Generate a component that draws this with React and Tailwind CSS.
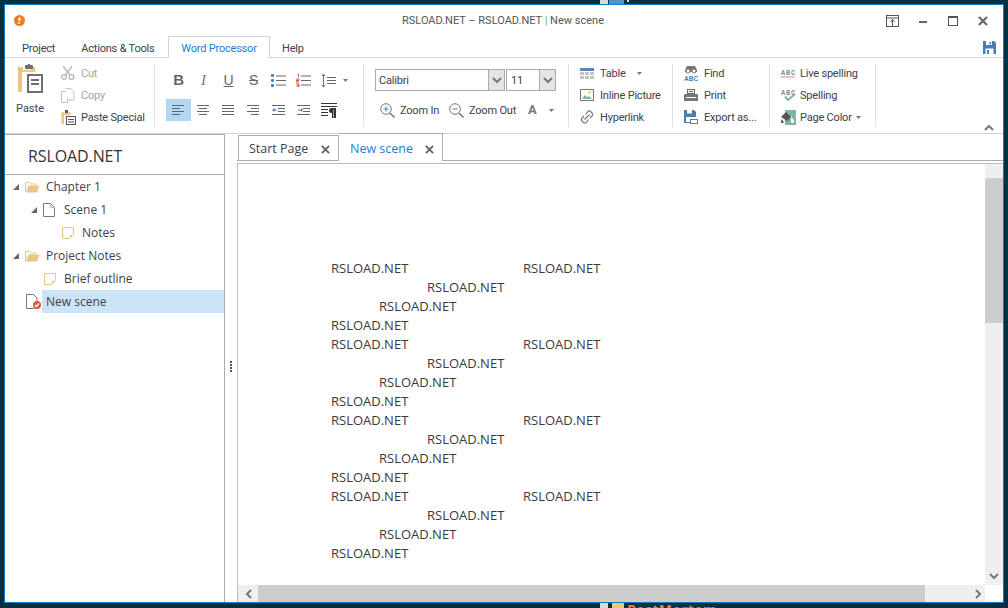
const UI = { fontFamily: '"Open Sans", sans-serif' };
const CHROME = { fontFamily: 'Roboto, sans-serif' };

const Ico = ({ w = 16, h = 16, className = '', children }) => (
  <svg width={w} height={h} viewBox={`0 0 ${w} ${h}`} fill="none" className={`shrink-0 ${className}`}>{children}</svg>
);

const Arrow = () => (
  <svg width="5" height="3" viewBox="0 0 5 3" className="shrink-0"><path d="M0 0h5L2.500 3z" fill="#777" /></svg>
);

const Chevron = () => (
  <svg width="10" height="7" viewBox="0 0 10 7" fill="none"><path d="M1 1l4 4 4-4" stroke="#777" strokeWidth="2" /></svg>
);

const PasteBig = () => (
  <Ico w={27} h={29}>
    <path d="M1 3h5v3h8V3h4v5H5v20H1z" fill="#ebc582" />
    <rect x="8" y="1" width="8" height="4" rx="1" fill="#6e6e6e" />
    <rect x="11" y="0" width="2" height="2" fill="#6e6e6e" />
    <rect x="11" y="11" width="14" height="17" stroke="#6e6e6e" strokeWidth="2" />
    <path d="M14 16h8M14 20h8" stroke="#6e6e6e" strokeWidth="2" />
  </Ico>
);
const CutIcon = () => (
  <Ico w={14} h={14}>
    <circle cx="3" cy="11" r="2.300" stroke="#b5b5b5" strokeWidth="1.300" />
    <circle cx="10.500" cy="11" r="2.300" stroke="#b5b5b5" strokeWidth="1.300" />
    <path d="M4.500 9L11 0M9 9L2 0" stroke="#b5b5b5" strokeWidth="1.300" />
  </Ico>
);
const CopyIcon = () => (
  <Ico w={14} h={15}>
    <path d="M.5 3.500h6v11h-6z" stroke="#c0c0c0" fill="#fff" />
    <path d="M4.500.500h5l3.500 3.500v8h-6" stroke="#c0c0c0" fill="#fff" />
  </Ico>
);
const PasteSmall = () => (
  <Ico w={15} h={15}>
    <path d="M.5 2h2v1h5V2h2v3H3v9H.5z" fill="#ebc582" />
    <rect x="4" y="0" width="3" height="3" fill="#555" />
    <rect x="5.500" y="6.500" width="9" height="8" stroke="#555" />
    <path d="M7 9.500h6M7 12h6" stroke="#555" />
  </Ico>
);

const BulletIcon = () => (
  <Ico w={15} h={13}>
    <path d="M5 2h10M5 6.500h10M5 11h10" stroke="#666" />
    <rect x="0" y="0" width="3" height="3" rx="1" fill="#4a7fb5" />
    <rect x="0" y="5" width="3" height="3" rx="1" fill="#4a7fb5" />
    <rect x="0" y="10" width="3" height="3" rx="1" fill="#4a7fb5" />
  </Ico>
);
const NumIcon = () => (
  <Ico w={15} h={13}>
    <path d="M5 2h10M5 6.500h10M5 11h10" stroke="#666" />
    <path d="M1 0h1.500v3M0 5h3v1.500H0V8h3M0 10h3v3H0M1 11.500h2" stroke="#d0604a" />
  </Ico>
);
const SpacingIcon = () => (
  <Ico w={15} h={15}>
    <path d="M6 4.500h9M6 7.500h9M6 10.500h9" stroke="#666" />
    <path d="M2.500 2v11" stroke="#4a7fb5" />
    <path d="M.5 3l2-2.500 2 2.500zM.5 12l2 2.500 2-2.500z" fill="#4a7fb5" />
  </Ico>
);
const AlignIcon = ({ rows }) => (
  <Ico w={13} h={10}>
    {rows.map(([x1, x2], i) => (
      <path key={i} d={`M${x1} ${i * 3 + 0.5}H${x2}`} stroke="#666" />
    ))}
  </Ico>
);
const IndentIcon = ({ right }) => (
  <Ico w={13} h={11}>
    <path d="M0 .5h13M6 3.500h7M6 6.500h7M0 9.500h13" stroke="#666" />
    <path d={right ? 'M1 5h3' : 'M2 5h3'} stroke="#4a7fb5" />
    <path d={right ? 'M4 3v4l2-2z' : 'M2.500 3v4L0 5z'} fill="#4a7fb5" />
  </Ico>
);
const ParaIcon = () => (
  <Ico w={16} h={15}>
    <path d="M0 3.500h16M0 .5h16M0 6.500h7M0 9.500h7M0 12.500h7" stroke="#333" />
    <path d="M15 5H10.500a2.500 2.500 0 000 5H11v5h1.500V6.500H13V15h2z" fill="#333" />
  </Ico>
);

const ZoomIcon = ({ out }) => (
  <Ico w={15} h={15}>
    <circle cx="6" cy="6" r="5.300" stroke="#777" />
    <path d="M10 10l4.500 4.500" stroke="#777" strokeWidth="1.500" />
    <path d="M3.500 6h5" stroke="#4a7fb5" />
    {!out && <path d="M6 3.500v5" stroke="#4a7fb5" />}
  </Ico>
);

const TableIcon = () => (
  <Ico w={14} h={11}>
    <rect width="14" height="3" fill="#5a86b8" />
    <path d="M0 4h4v3H0zM5 4h4v3H5zM10 4h4v3h-4zM0 8h4v3H0zM5 8h4v3H5zM10 8h4v3h-4z" fill="#c4c4c4" />
  </Ico>
);
const PictureIcon = () => (
  <Ico w={14} h={12}>
    <rect x=".5" y=".5" width="13" height="11" stroke="#777" />
    <path d="M2 10l3-4 2 2 2-1 3 3z" fill="#7fb5a3" />
    <circle cx="9.500" cy="3.500" r="1.300" fill="#ebc582" />
  </Ico>
);
const LinkIcon = () => (
  <Ico w={14} h={14}>
    <path d="M5.500 4.500l2-2.500a2 2 0 013.500 0l1 1a2 2 0 010 3l-2 2M8.500 9.500l-2 2.500a2 2 0 01-3.500 0l-1-1a2 2 0 010-3l2-2M4.500 9.500l5-5" stroke="#777" strokeWidth="1.200" />
  </Ico>
);
const FindIcon = () => (
  <Ico w={14} h={15}>
    <path d="M3 0h8l2 4v2H1V4z" fill="#777" />
    <circle cx="4" cy="5" r="2" fill="#fff" stroke="#777" />
    <circle cx="10" cy="5" r="2" fill="#fff" stroke="#777" />
    <text x="0" y="14.500" fontSize="6.500" fontWeight="700" fill="#4a7fb5" fontFamily="Liberation Sans" textLength="14">ABC</text>
  </Ico>
);
const PrintIcon = () => (
  <Ico w={14} h={13}>
    <rect x="3.500" y=".5" width="7" height="4" stroke="#666" />
    <path d="M5 2.500h4" stroke="#666" />
    <path d="M0 6a1 1 0 011-1h12a1 1 0 011 1v6H0z" fill="#777" />
    <rect x="2" y="8" width="10" height="1" fill="#fff" />
  </Ico>
);
const FloppyIcon = () => (
  <svg width="13" height="13" viewBox="0 0 13 13" className="shrink-0">
    <path d="M0 0h11l2 2v11H0z" fill="#4a7fb5" />
    <rect x="3" y="0" width="6" height="4" fill="#fff" />
    <rect x="2.500" y="7.500" width="8" height="5.500" fill="#fff" />
    <rect x="6.500" y="1" width="1.500" height="2.500" fill="#4a7fb5" />
    <rect x="4" y="9" width="2" height="4" fill="#4a7fb5" />
  </svg>
);
const ExportIcon = () => (
  <Ico w={14} h={14}>
    <path d="M0 0h10l2 2v5H6v6H0z" fill="#4a7fb5" />
    <rect x="3" y="0" width="5" height="3.500" fill="#fff" />
    <rect x="2" y="7" width="4" height="5" fill="#fff" />
    <rect x="6.500" y="9.500" width="7" height="4" stroke="#777" fill="#fff" />
  </Ico>
);
const AbcText = () => (
  <text x="0" y="7" fontSize="7" fill="#888" fontFamily="Liberation Mono" fontWeight="700" textLength="14">ABC</text>
);
const LiveIcon = () => (
  <Ico w={15} h={11}>
    <AbcText />
    <path d="M0 9.500l1.500-1 1.500 1 1.500-1 1.500 1 1.500-1 1.500 1 1.500-1 1.500 1 1.500-1" stroke="#e07a7a" />
  </Ico>
);
const SpellIcon = () => (
  <Ico w={15} h={14}>
    <AbcText />
    <path d="M4 8.500l3 3.500 7-6" stroke="#7fb5a3" strokeWidth="2" />
  </Ico>
);
const PageColorIcon = () => (
  <Ico w={15} h={15}>
    <path d="M4 0h11v15H4z" fill="#7fb5a3" />
    <path d="M0 7l5-5 5 5-4 4z" fill="#555" />
    <path d="M10 6l3 5a1.500 1.500 0 01-3 1z" fill="#fff" />
    <path d="M1 9l-1 2v2h3z" fill="#555" />
  </Ico>
);

const PinIcon = () => (
  <Ico w={13} h={12}>
    <rect x=".5" y=".5" width="12" height="11" stroke="#555" />
    <path d="M1 3h11" stroke="#555" />
    <path d="M6.500 11V5M4.500 7l2-2.500 2 2.500" stroke="#555" />
  </Ico>
);
const CloseX = ({ s = 10, color = '#666' }) => (
  <svg width={s} height={s} viewBox="0 0 10 10" className="shrink-0"><path d="M1 1l8 8M9 1l-8 8" stroke={color} strokeWidth="2.200" /></svg>
);

const FolderIcon = () => (
  <Ico w={15} h={12}>
    <path d="M.5 11V1.500h4l1.500 1.500h5v1" stroke="#ebc582" />
    <path d="M1 11.500l2.500-7h11l-2.500 7z" fill="#ebc582" />
  </Ico>
);
const PageIcon = () => (
  <Ico w={12} h={14}>
    <path d="M.5.500h7l4 4v9H.5z" stroke="#777" />
    <path d="M7.500.500v4h4" stroke="#bbb" />
  </Ico>
);
const NoteIcon = () => (
  <Ico w={12} h={12}>
    <path d="M.5.500h11v7l-4 4H.5z" stroke="#ebc582" />
    <path d="M11 8H8v3z" fill="#ebc582" />
  </Ico>
);
const CheckPageIcon = () => (
  <Ico w={15} h={15}>
    <path d="M8 14.500H.5V.500h7l3.500 3.500v4" stroke="#777" />
    <circle cx="11" cy="11" r="4" fill="#d9583f" />
    <path d="M9 11l1.500 1.500L13 9.500" stroke="#fff" strokeWidth="1.200" />
  </Ico>
);
const Tri = () => (
  <svg width="6" height="6" viewBox="0 0 6 6" className="shrink-0"><path d="M6 0v6H0z" fill="#666" /></svg>
);

function Small({ icon, label, disabled, arrow, gap = 'w-[20px]', extra }) {
  return (
    <div className="flex items-center h-[22px]">
      <div className={`${gap} flex shrink-0`}>{icon}</div>
      <span className={`whitespace-nowrap pt-[2px] ${disabled ? 'text-[#a3a3a3]' : 'text-[#404048]'}`}>{label}</span>
      {arrow && <span className={extra}><Arrow /></span>}
    </div>
  );
}

const tabCell = 'w-[25px] h-[22px] flex items-center justify-center';

function Ribbon() {
  return (
    <div className="h-[76px] flex border-b border-[#d4d4d4] text-[11px] tracking-[-0.2px] pt-[6px]" style={CHROME}>
      {/* clipboard */}
      <div className="w-[150px] h-[63px] border-r border-[#e0e0e0] flex">
        <div className="w-[50px] flex flex-col items-center text-[#404048] tracking-normal">
          <PasteBig />
          <span className="mt-[8px]">Paste</span>
        </div>
        <div className="pl-[6px] -mt-[2px]">
          <Small icon={<CutIcon />} label="Cut" disabled />
          <Small icon={<CopyIcon />} label="Copy" disabled />
          <Small icon={<PasteSmall />} label="Paste Special" />
        </div>
      </div>

      {/* text format */}
      <div className="w-[209px] h-[63px] border-r border-[#e0e0e0] pl-[11px] pt-[5px]">
        <div className="flex h-[22px] mb-[8px]">
          <div className={tabCell}><span className="text-[15px] font-bold text-[#666]" style={{ fontFamily: 'Liberation Sans' }}>B</span></div>
          <div className={tabCell}><span className="text-[15px] italic text-[#777]" style={{ fontFamily: 'Liberation Serif' }}>I</span></div>
          <div className={tabCell}><span className="text-[14px] underline text-[#666]" style={{ fontFamily: 'Liberation Sans' }}>U</span></div>
          <div className={tabCell}><span className="text-[14px] line-through text-[#666]" style={{ fontFamily: 'Liberation Sans' }}>S</span></div>
          <div className={tabCell}><BulletIcon /></div>
          <div className={tabCell}><NumIcon /></div>
          <div className={tabCell}><SpacingIcon /></div>
          <div className="flex items-center pl-[2px]"><Arrow /></div>
        </div>
        <div className="flex">
          <div className={`${tabCell} bg-[#b3d7f0]`}><AlignIcon rows={[[0, 12], [0, 8], [0, 12], [0, 8]]} /></div>
          <div className={tabCell}><AlignIcon rows={[[0, 12], [2, 10], [0, 12], [2, 10]]} /></div>
          <div className={tabCell}><AlignIcon rows={[[0, 12], [0, 12], [0, 12], [0, 12]]} /></div>
          <div className={tabCell}><AlignIcon rows={[[0, 12], [4, 12], [0, 12], [4, 12]]} /></div>
          <div className={tabCell}><IndentIcon /></div>
          <div className={tabCell}><IndentIcon right /></div>
          <div className={tabCell}><ParaIcon /></div>
        </div>
      </div>

      {/* font */}
      <div className="w-[205px] h-[63px] border-r border-[#e0e0e0] pl-[11px]">
        <div className="flex gap-[1px] mt-[5px] h-[22px]">
          <div className="w-[130px] border border-[#ababab] flex items-center justify-between">
            <span className="pl-[3px] pt-[2px] text-[#404048]">Calibri</span>
            <div className="w-[16px] h-full bg-[#e4e4e4] border-l border-[#ababab] flex items-center justify-center"><Chevron /></div>
          </div>
          <div className="w-[50px] border border-[#ababab] flex items-center justify-between">
            <span className="pl-[4px] pt-[2px] text-[#404048]">11</span>
            <div className="w-[16px] h-full bg-[#e4e4e4] border-l border-[#ababab] flex items-center justify-center"><Chevron /></div>
          </div>
        </div>
        <div className="flex items-center mt-[8px] h-[22px] pl-[5px] text-[#404048]">
          <ZoomIcon />
          <span className="ml-[5px] pt-[2px] w-[49px] whitespace-nowrap">Zoom In</span>
          <ZoomIcon out />
          <span className="ml-[5px] pt-[2px] w-[59px] whitespace-nowrap">Zoom Out</span>
          <span className="font-bold text-[#777] text-[13px] w-[21px]">A</span>
          <Arrow />
        </div>
      </div>

      {/* insert */}
      <div className="w-[104px] h-[63px] border-r border-[#e0e0e0] pl-[11px]">
        <div className="-mt-[2px]">
          <Small icon={<TableIcon />} label="Table" arrow extra="ml-[11px]" />
          <Small icon={<PictureIcon />} label="Inline Picture" />
          <Small icon={<LinkIcon />} label="Hyperlink" />
        </div>
      </div>

      {/* document */}
      <div className="w-[97px] h-[63px] border-r border-[#e0e0e0] pl-[11px]">
        <div className="-mt-[2px]">
          <Small icon={<FindIcon />} label="Find" />
          <Small icon={<PrintIcon />} label="Print" />
          <Small icon={<ExportIcon />} label="Export as..." />
        </div>
      </div>

      {/* spelling */}
      <div className="w-[106px] h-[63px] border-r border-[#e0e0e0] pl-[11px]">
        <div className="-mt-[2px]">
          <Small icon={<LiveIcon />} label="Live spelling" gap="w-[19px]" />
          <Small icon={<SpellIcon />} label="Spelling" gap="w-[19px]" />
          <Small icon={<PageColorIcon />} label="Page Color" gap="w-[19px]" arrow extra="ml-[4px]" />
        </div>
      </div>

      <div className="flex-1 flex justify-end items-end pr-[9px] pb-[2px]">
        <svg width="10" height="6" viewBox="0 0 10 6" fill="none"><path d="M1 5l4-4 4 4" stroke="#777" strokeWidth="2" /></svg>
      </div>
    </div>
  );
}

function TreeRow({ pl, tri, icon, label, gap = 6, selected }) {
  return (
    <div className="h-[23px] flex items-center" style={{ paddingLeft: pl }}>
      {tri && <span className="mr-[6px] flex"><Tri /></span>}
      <span className="flex">{icon}</span>
      <span
        className={selected
          ? 'ml-[1px] flex-1 self-stretch bg-[#cce4f7] flex items-center pl-[4px]'
          : ''}
        style={selected ? undefined : { marginLeft: gap }}
      >
        {label}
      </span>
    </div>
  );
}

function Sidebar() {
  return (
    <div className="w-[220px] shrink-0 border-r border-[#ababab] border-t text-[12px] text-[#404048]">
      <div className="h-[40px] border-b border-[#ababab] flex items-center pl-[23px] pt-[2px] text-[16px] tracking-[-0.1px] text-[#333]">RSLOAD.NET</div>
      <TreeRow pl={8} tri icon={<FolderIcon />} label="Chapter 1" />
      <TreeRow pl={26} tri icon={<PageIcon />} label="Scene 1" gap={9} />
      <TreeRow pl={57} icon={<NoteIcon />} label="Notes" gap={8} />
      <TreeRow pl={8} tri icon={<FolderIcon />} label="Project Notes" />
      <TreeRow pl={39} icon={<NoteIcon />} label="Brief outline" gap={8} />
      <TreeRow pl={21} icon={<CheckPageIcon />} label="New scene" selected />
    </div>
  );
}

const docRows = [
  { pl: 0, second: true }, { pl: 96 }, { pl: 48 }, { pl: 0 },
  { pl: 0, second: true }, { pl: 96 }, { pl: 48 }, { pl: 0 },
  { pl: 0, second: true }, { pl: 96 }, { pl: 48 }, { pl: 0 },
  { pl: 0, second: true }, { pl: 96 }, { pl: 48 }, { pl: 0 },
];

function Document() {
  return (
    <div className="flex-1 flex flex-col min-w-0">
      {/* tab strip */}
      <div className="h-[27px] flex items-end text-[12.500px] pl-[1px] border-b border-[#ababab] shrink-0">
        <div className="w-[101px] h-[25px] pt-[2px] border border-b-0 border-[#ababab] flex items-center justify-between pl-[10px] pr-[8px] text-[#404048]">
          <span>Start Page</span><CloseX s={9} />
        </div>
        <div className="w-[104px] h-[28px] -mb-[1px] pt-[3px] border border-l-0 border-b-0 border-[#ababab] bg-white flex items-center justify-between pl-[11px] pr-[8px] text-[#1a7fd6]">
          <span>New scene</span><CloseX s={9} />
        </div>
      </div>
      <div className="flex-1 flex flex-col border-l border-t border-[#bcbcbc] min-h-0 mt-[2px]">
        <div className="flex-1 flex min-h-0">
          <div className="flex-1 pt-[95px] pl-[93px] text-[#3a3a3a] text-[13px] leading-[19px]">
            {docRows.map((r, i) => (
              <div key={i} className="flex h-[19px]" style={{ paddingLeft: r.pl }}>
                <span className="w-[192px] shrink-0">RSLOAD.NET</span>
                {r.second && <span>RSLOAD.NET</span>}
              </div>
            ))}
          </div>
          {/* vertical scrollbar */}
          <div className="w-[18px] shrink-0 bg-[#efefef] flex flex-col">
            <div className="h-[14px]" />
            <div className="h-[145px] bg-[#cdcdcd]" />
            <div className="flex-1" />
            <div className="h-[18px] flex items-center justify-center"><Chevron /></div>
          </div>
        </div>
        {/* horizontal scrollbar */}
        <div className="h-[17px] flex shrink-0">
          <div className="w-[20px] bg-[#efefef] flex items-center justify-center">
            <svg width="7" height="10" viewBox="0 0 7 10" fill="none"><path d="M6 1L2 5l4 4" stroke="#777" strokeWidth="2" /></svg>
          </div>
          <div className="w-[667px] bg-[#cdcdcd]" />
          <div className="flex-1 bg-[#efefef] flex items-center justify-end pr-[3px]">
            <svg width="7" height="10" viewBox="0 0 7 10" fill="none"><path d="M1 1l4 4-4 4" stroke="#777" strokeWidth="2" /></svg>
          </div>
          <div className="w-[18px] bg-white" />
        </div>
      </div>
    </div>
  );
}

export default function App() {
  return (
    <div className="w-[1008px] h-[608px] bg-[#05303f] flex flex-col overflow-hidden" style={UI}>
      {/* what shows of the desktop above the window */}
      <div className="h-[4px] shrink-0 flex pl-[600px]">
        <div className="w-[8px] bg-[#d8d8d8]" />
        <div className="w-[1px]" />
        <div className="w-[15px] bg-[#4f94d4]" />
        <div className="w-[3px]" />
        <div className="w-[2px] h-[2px] bg-[#e8dcc0]" />
      </div>

      <div className="mx-[4px] h-[599px] shrink-0 border border-[#0f7ac6] bg-white flex flex-col">
        {/* title bar */}
        <div className="h-[32px] shrink-0 flex items-center text-[11px] text-[#555]" style={CHROME}>
          <svg width="11" height="11" viewBox="0 0 11 11" className="ml-[9px] -mt-[1px] shrink-0">
            <circle cx="5.500" cy="5.500" r="5.500" fill="#ee7d21" />
            <path d="M5.500 2.500v3.500" stroke="#fff" strokeWidth="2" />
            <circle cx="5" cy="8" r="1" fill="#fff" />
          </svg>
          <div className="ml-[377px] pt-[1px] whitespace-nowrap">RSLOAD.NET – RSLOAD.NET <span className="text-[#5b9bd5]">|</span> New scene</div>
          <div className="ml-auto flex items-center pr-[15px] -mt-[1px]">
            <PinIcon />
            <div className="w-[8px] h-[2px] bg-[#666] ml-[20px] mt-[3px]" />
            <div className="w-[10px] h-[10px] border border-t-[2px] border-[#555] ml-[21px]" />
            <span className="ml-[20px] flex"><CloseX /></span>
          </div>
        </div>

        {/* ribbon tabs */}
        <div className="h-[21px] shrink-0 flex items-end border-b border-[#d4d4d4] text-[11px] tracking-[-0.2px] text-[#404048]" style={CHROME}>
          <div className="w-[163px] flex shrink-0 h-[20px] items-center pt-[4px]">
            <span className="ml-[17px]">Project</span>
            <span className="ml-[26px] whitespace-nowrap">Actions &amp; Tools</span>
          </div>
          <div className="w-[102px] h-[22px] -mb-[1px] pt-[4px] bg-white border border-b-0 border-[#d4d4d4] text-[#1a7fd6] flex items-center justify-center whitespace-nowrap">Word Processor</div>
          <span className="ml-[12px] h-[20px] pt-[4px] flex items-center">Help</span>
          <span className="ml-auto mr-[7px] mb-[3px] flex"><FloppyIcon /></span>
        </div>

        <Ribbon />

        <div className="flex-1 flex min-h-0">
          <Sidebar />
          {/* splitter */}
          <div className="w-[12px] shrink-0 flex flex-col items-center justify-center gap-[1px] pb-[4px]">
            {[0, 1, 2, 3].map(i => <div key={i} className="w-[2px] h-[2px] bg-[#555]" />)}
          </div>
          <Document />
        </div>
      </div>

      {/* desktop again, below the window */}
      <div className="flex-1 flex pl-[600px] overflow-hidden">
        <div className="w-[8px] h-full bg-[#d8d8d8]" />
        <div className="w-[12px] h-full bg-[#e8c878] ml-[4px]" />
        <span className="ml-[3px] font-bold text-[14px] leading-[14px] text-[#e8794a] tracking-[0.3px]">PostMortem</span>
      </div>
    </div>
  );
}
